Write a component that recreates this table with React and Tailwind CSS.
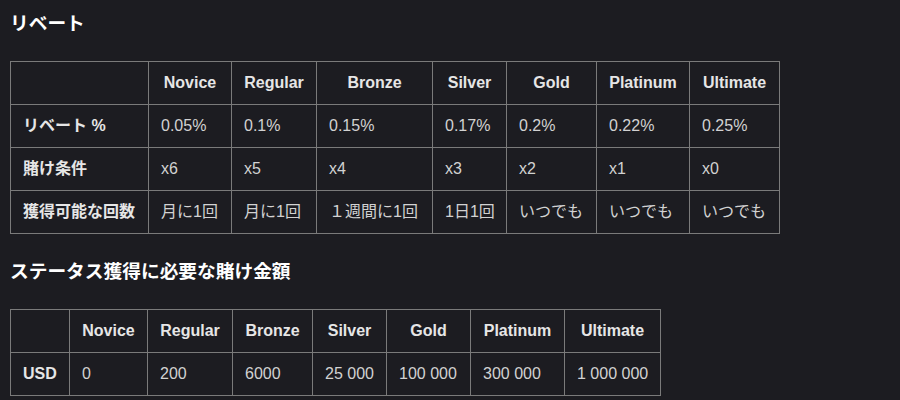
import React from "react";

const font = { fontFamily: '"Liberation Sans", Arial, "Noto Sans CJK JP", sans-serif' };

const t1cols = [138, 83, 85, 116, 74, 90, 93, 90];
const t1w = ["w-[138px]", "w-[83px]", "w-[85px]", "w-[116px]", "w-[74px]", "w-[90px]", "w-[93px]", "w-[90px]"];
const t2w = ["w-[59px]", "w-[78px]", "w-[85px]", "w-[80px]", "w-[74px]", "w-[84px]", "w-[94px]", "w-[96px]"];

const tiers = ["Novice", "Regular", "Bronze", "Silver", "Gold", "Platinum", "Ultimate"];

const rows1 = [
  ["リベート %", "0.05%", "0.1%", "0.15%", "0.17%", "0.2%", "0.22%", "0.25%"],
  ["賭け条件", "x6", "x5", "x4", "x3", "x2", "x1", "x0"],
  ["獲得可能な回数", "月に1回", "月に1回", "１週間に1回", "1日1回", "いつでも", "いつでも", "いつでも"],
];

const rows2 = [["USD", "0", "200", "6000", "25 000", "100 000", "300 000", "1 000 000"]];

function Table({ widths, rows, total }) {
  return (
    <table className={`table-fixed border-collapse ${total} text-[16px]`}>
      <colgroup>
        {widths.map((w, i) => (
          <col key={i} className={w} />
        ))}
      </colgroup>
      <thead>
        <tr className="h-[43px]">
          <th className="border border-[#7a7a7a] px-3"></th>
          {tiers.map((t) => (
            <th key={t} className="border border-[#7a7a7a] px-3 text-center font-bold text-[#e6e6e6] whitespace-nowrap">
              {t}
            </th>
          ))}
        </tr>
      </thead>
      <tbody>
        {rows.map((r, ri) => (
          <tr key={ri} className="h-[43px]">
            {r.map((c, ci) =>
              ci === 0 ? (
                <th key={ci} className="border border-[#7a7a7a] px-3 text-left font-bold text-[#e6e6e6] whitespace-nowrap">
                  {c}
                </th>
              ) : (
                <td key={ci} className="border border-[#7a7a7a] px-3 text-left text-[#d2d2d2] whitespace-nowrap">
                  {c}
                </td>
              )
            )}
          </tr>
        ))}
      </tbody>
    </table>
  );
}

export default function App() {
  return (
    <div className="w-[900px] h-[400px] overflow-hidden bg-[#1c1c21] px-[10px]" style={font}>
      <h3 className="pt-[10px] text-[18.72px] leading-[27px] font-bold text-white">リベート</h3>
      <div className="mt-[24px]">
        <Table widths={t1w} rows={rows1} total="w-[770px]" />
      </div>
      <h3 className="mt-[24px] text-[18.72px] leading-[27px] font-bold text-white">ステータス獲得に必要な賭け金額</h3>
      <div className="mt-[24px]">
        <Table widths={t2w} rows={rows2} total="w-[651px]" />
      </div>
    </div>
  );
}
